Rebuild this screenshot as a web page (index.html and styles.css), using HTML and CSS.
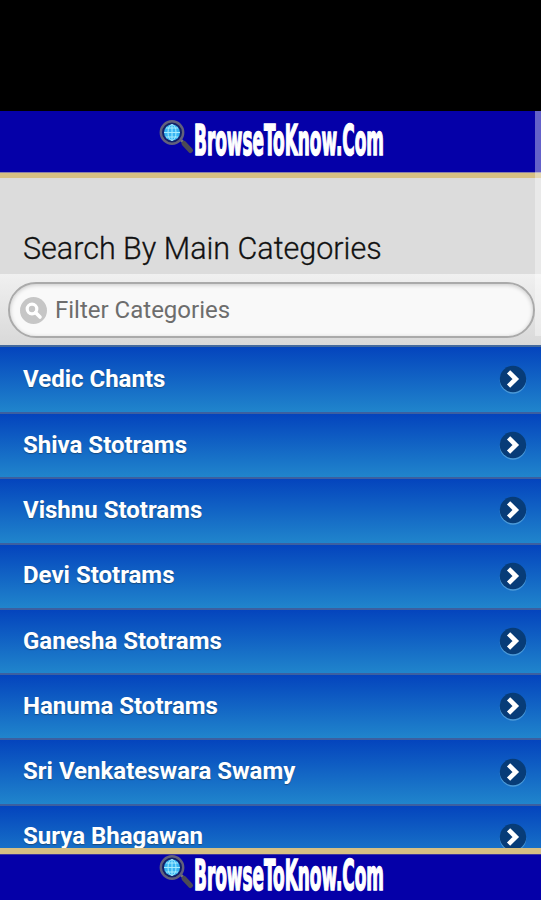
FILE: index.html
```html
<!DOCTYPE html>
<html lang="en">
<head>
    <meta charset="UTF-8">
    <meta name="viewport" content="width=device-width, initial-scale=1.0">
    <title>BrowseToKnow.Com</title>
    <link rel="stylesheet" href="styles.css">
</head>
<body>
    <!-- shared icons -->
    <svg class="defs" width="0" height="0">
        <symbol id="glass" viewBox="0 0 36 44">
            <path d="M22 22l4 4" stroke="#777" stroke-width="2.5"/>
            <path d="M25 25.500l6.500 7" stroke="#4c4a55" stroke-width="5" stroke-linecap="round"/>
            <circle cx="13" cy="14.500" r="11.200" fill="#12206a" stroke="#62607c" stroke-width="2.400"/>
            <circle cx="13" cy="14.500" r="8" fill="#38b5f2"/>
            <path d="M5 14.500h16M13 6.500v16M7 10h12M7 19h12" stroke="#a5ecff" stroke-width="1"/>
            <ellipse cx="13" cy="14.500" rx="4" ry="8" fill="none" stroke="#a5ecff" stroke-width="1"/>
        </symbol>
        <symbol id="arrow" viewBox="0 0 28 30">
            <circle cx="14" cy="15.500" r="13.200" fill="#4b9ad8"/>
            <circle cx="14" cy="14" r="13.200" fill="#073c78"/>
            <path d="M11.200 8.500l5.600 5.500-5.600 5.500" fill="none" stroke="#fff" stroke-width="4.600" stroke-linecap="square"/>
        </symbol>
    </svg>

    <div class="status-bar"></div>
    <div class="header">
        <svg class="logo" viewBox="0 0 230 44">
            <use href="#glass" width="36" height="44"/>
            <text class="logo-text" x="35" y="36.500" textLength="190" lengthAdjust="spacingAndGlyphs">BrowseToKnow.Com</text>
        </svg>
    </div>
    <div class="content">
        <h1>Search By Main Categories</h1>
        <div class="filter">
            <div class="search-box">
                <svg class="search-icon" viewBox="0 0 27 27">
                    <circle cx="13.500" cy="13.500" r="13.500" fill="#c6c6c6"/>
                    <circle cx="12" cy="12" r="4.800" fill="none" stroke="#fff" stroke-width="3.200"/>
                    <path d="M15.500 15.500l4.500 4.500" stroke="#fff" stroke-width="3.600" stroke-linecap="round"/>
                </svg>
                <span>Filter Categories</span>
            </div>
        </div>
        <ul class="categories">
            <li><span>Vedic Chants</span><svg class="arrow"><use href="#arrow"/></svg></li>
            <li><span>Shiva Stotrams</span><svg class="arrow"><use href="#arrow"/></svg></li>
            <li><span>Vishnu Stotrams</span><svg class="arrow"><use href="#arrow"/></svg></li>
            <li><span>Devi Stotrams</span><svg class="arrow"><use href="#arrow"/></svg></li>
            <li><span>Ganesha Stotrams</span><svg class="arrow"><use href="#arrow"/></svg></li>
            <li><span>Hanuma Stotrams</span><svg class="arrow"><use href="#arrow"/></svg></li>
            <li><span>Sri Venkateswara Swamy</span><svg class="arrow"><use href="#arrow"/></svg></li>
            <li><span>Surya Bhagawan</span><svg class="arrow"><use href="#arrow"/></svg></li>
        </ul>
    </div>
    <div class="footer">
        <svg class="logo" viewBox="0 0 230 44">
            <use href="#glass" width="36" height="44"/>
            <text class="logo-text" x="35" y="36.500" textLength="190" lengthAdjust="spacingAndGlyphs">BrowseToKnow.Com</text>
        </svg>
    </div>
    <div class="scrollbar"></div>
</body>
</html>
```
FILE: styles.css
```css
* {
    box-sizing: border-box;
}
body {
    margin: 0;
    height: 900px;
    display: flex;
    flex-direction: column;
    overflow: hidden;
    position: relative;
    background-color: #dcdcdc;
    font-family: Roboto, sans-serif;
}
.defs {
    position: absolute;
}
.status-bar {
    flex: none;
    height: 111px;
    background-color: #000;
}
.header {
    flex: none;
    height: 67px;
    padding-top: 7px;
    background-color: #0500a8;
    border-bottom: 5px solid #d6bf83;
    box-shadow: inset 0 -1px 0 #8a80a8;
}
.logo {
    display: block;
    width: 230px;
    height: 44px;
    margin-left: 159px;
}
.logo-text {
    font-family: "DejaVu Sans Condensed", "DejaVu Sans", sans-serif;
    font-weight: bold;
    font-size: 43px;
    fill: #fff;
    stroke: #fff;
    stroke-width: 1.6px;
}
.content {
    flex: 1;
    min-height: 0;
    overflow: hidden;
}
h1 {
    margin: 0;
    height: 96px;
    padding: 53px 23px 0;
    font-size: 30.5px;
    line-height: 36px;
    font-weight: 300;
    color: #111;
    -webkit-text-stroke: 0.3px #111;
    white-space: nowrap;
}
.filter {
    height: 71px;
    padding: 8px 6px 7px 8px;
    background: linear-gradient(#f0f0f0, #d9d9d9);
}
.search-box {
    display: flex;
    align-items: center;
    height: 56px;
    padding-left: 10px;
    border: 2px solid #aaa;
    border-radius: 28px;
    background-color: #f9f9f9;
    box-shadow: inset 0 1px 4px rgba(0, 0, 0, 0.2);
    font-size: 24px;
    color: #6d6d6d;
}
.search-icon {
    width: 27px;
    height: 27px;
    margin-right: 8px;
}
.categories {
    list-style: none;
    margin: 0;
    padding: 0;
}
.categories li {
    display: flex;
    align-items: center;
    justify-content: space-between;
    height: 65.3px;
    padding: 0 14px 0 23px;
    border-top: 2px solid #3c5fa0;
    background: linear-gradient(#0444bd, #2085cc);
    color: #fff;
    font-size: 24px;
    font-weight: bold;
    text-shadow: 0 1px 1px #194b7e;
}
.categories li:first-child {
    height: 67px;
    border-top-color: #456a9c;
}
.categories span {
    padding-bottom: 2px;
}
.arrow {
    width: 28px;
    height: 30px;
    margin-top: 1px;
}
.footer {
    flex: none;
    height: 52px;
    border-top: 6px solid #d6bf83;
    background-color: #0500a8;
    box-shadow: inset 0 1px 0 #40359c;
}
.footer .logo {
    margin-top: -1px;
}
.scrollbar {
    position: absolute;
    top: 111px;
    right: 0;
    width: 6px;
    height: 225px;
    background-color: rgba(255, 255, 255, 0.38);
}
```
